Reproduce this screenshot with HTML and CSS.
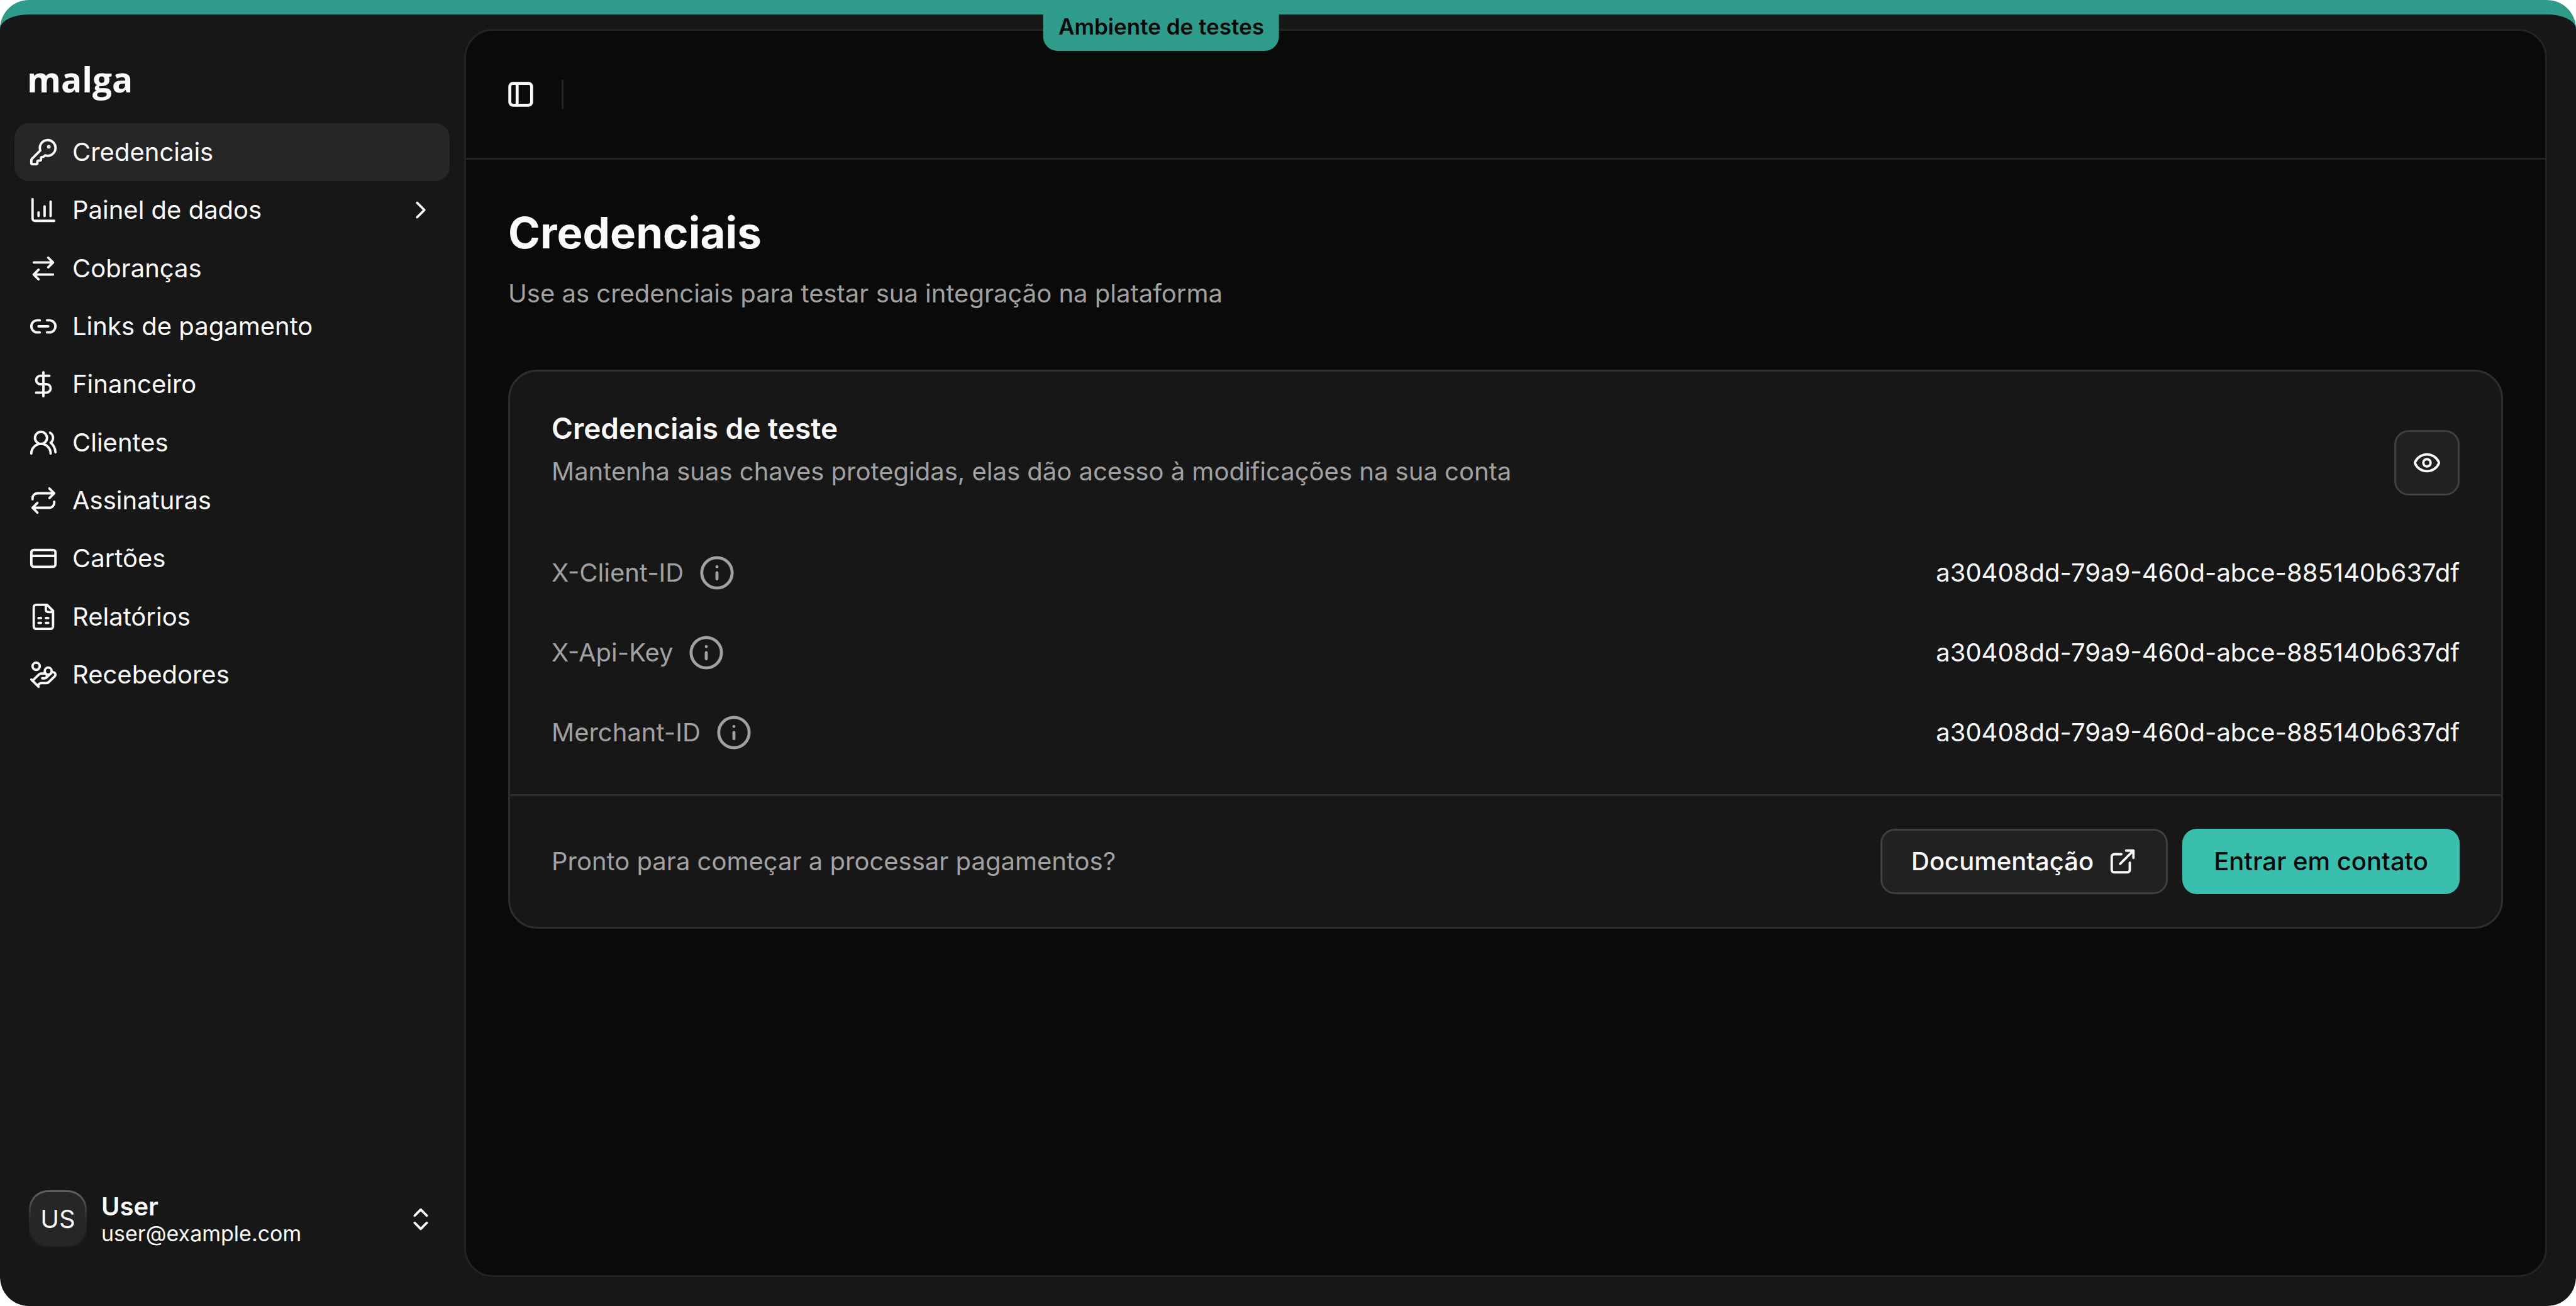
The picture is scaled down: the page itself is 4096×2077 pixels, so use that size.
FILE: index.html
```html
<!DOCTYPE html>
<html lang="pt-BR">
<head>
  <meta charset="utf-8">
  <meta name="viewport" content="width=device-width, initial-scale=1">
  <title>Credenciais – malga</title>
  <link rel="stylesheet" href="styles.css">
</head>
<body>
  <div class="app">
    <div class="env-badge">Ambiente de testes</div>

    <aside class="sidebar">
      <a class="logo" href="#">malga</a>

      <nav class="nav" aria-label="Principal">
        <a class="nav-item is-active" href="#" aria-current="page">
          <svg class="icon" viewBox="0 0 24 24" aria-hidden="true"><path d="M2.586 17.414A2 2 0 0 0 2 18.828V21a1 1 0 0 0 1 1h3a1 1 0 0 0 1-1v-1a1 1 0 0 1 1-1h1a1 1 0 0 0 1-1v-1a1 1 0 0 1 1-1h.172a2 2 0 0 0 1.414-.586l.814-.814a6.5 6.5 0 1 0-4-4z"/><circle cx="16.5" cy="7.5" r=".5" fill="currentColor"/></svg>
          <span class="nav-label">Credenciais</span>
        </a>
        <a class="nav-item" href="#">
          <svg class="icon" viewBox="0 0 24 24" aria-hidden="true"><path d="M3 3v16a2 2 0 0 0 2 2h16M18 17V5M13 17V9M8 17v-3"/></svg>
          <span class="nav-label">Painel de dados</span>
          <svg class="icon" viewBox="0 0 24 24" aria-hidden="true"><path d="m9 18 6-6-6-6"/></svg>
        </a>
        <a class="nav-item" href="#">
          <svg class="icon" viewBox="0 0 24 24" aria-hidden="true"><path d="m16 3 4 4-4 4M20 7H4M8 21l-4-4 4-4M4 17h16"/></svg>
          <span class="nav-label">Cobranças</span>
        </a>
        <a class="nav-item" href="#">
          <svg class="icon" viewBox="0 0 24 24" aria-hidden="true"><path d="M9 17H7A5 5 0 0 1 7 7h2M15 7h2a5 5 0 1 1 0 10h-2M8 12h8"/></svg>
          <span class="nav-label">Links de pagamento</span>
        </a>
        <a class="nav-item" href="#">
          <svg class="icon" viewBox="0 0 24 24" aria-hidden="true"><path d="M12 2v20M17 5H9.500a3.500 3.500 0 0 0 0 7h5a3.500 3.500 0 0 1 0 7H6"/></svg>
          <span class="nav-label">Financeiro</span>
        </a>
        <a class="nav-item" href="#">
          <svg class="icon" viewBox="0 0 24 24" aria-hidden="true"><path d="M18 21a8 8 0 0 0-16 0"/><circle cx="10" cy="8" r="5"/><path d="M22 20c0-3.370-2-6.500-4-8a5 5 0 0 0-.450-8.300"/></svg>
          <span class="nav-label">Clientes</span>
        </a>
        <a class="nav-item" href="#">
          <svg class="icon" viewBox="0 0 24 24" aria-hidden="true"><path d="m17 2 4 4-4 4M3 11v-1a4 4 0 0 1 4-4h14M7 22l-4-4 4-4M21 13v1a4 4 0 0 1-4 4H3"/></svg>
          <span class="nav-label">Assinaturas</span>
        </a>
        <a class="nav-item" href="#">
          <svg class="icon" viewBox="0 0 24 24" aria-hidden="true"><rect x="2" y="5" width="20" height="14" rx="2"/><path d="M2 10h20"/></svg>
          <span class="nav-label">Cartões</span>
        </a>
        <a class="nav-item" href="#">
          <svg class="icon" viewBox="0 0 24 24" aria-hidden="true"><path d="M15 2H6a2 2 0 0 0-2 2v16a2 2 0 0 0 2 2h12a2 2 0 0 0 2-2V7ZM14 2v4a2 2 0 0 0 2 2h4M8 13h2M14 13h2M8 17h2M14 17h2"/></svg>
          <span class="nav-label">Relatórios</span>
        </a>
        <a class="nav-item" href="#">
          <svg class="icon" viewBox="0 0 24 24" aria-hidden="true"><path d="M11 15h2a2 2 0 1 0 0-4h-3c-.6 0-1.100.2-1.400.6L3 17"/><path d="m7 21 1.600-1.400c.3-.4.8-.6 1.400-.6h4c1.100 0 2.100-.4 2.800-1.200l4.600-4.400a2 2 0 0 0-2.750-2.910l-4.200 3.900M2 16l6 6"/><circle cx="16" cy="9" r="2.900"/><circle cx="6" cy="5" r="3"/></svg>
          <span class="nav-label">Recebedores</span>
        </a>
      </nav>

      <button class="user" type="button">
        <span class="avatar">US</span>
        <span class="user-text">
          <span class="user-name">User</span>
          <span class="user-email">user@example.com</span>
        </span>
        <svg class="icon" viewBox="0 0 24 24" aria-hidden="true"><path d="m7 15 5 5 5-5M7 9l5-5 5 5"/></svg>
      </button>
    </aside>

    <main class="panel">
      <header class="topbar">
        <button class="toggle" type="button" aria-label="Alternar menu lateral">
          <svg viewBox="0 0 42 42" aria-hidden="true"><rect x="2.800" y="2.800" width="36.400" height="36.400" rx="5"/><path d="M15 3v36"/></svg>
        </button>
        <span class="separator"></span>
      </header>

      <div class="content">
        <h1 class="title">Credenciais</h1>
        <p class="subtitle">Use as credenciais para testar sua integração na plataforma</p>

        <section class="card">
          <div class="card-body">
            <div class="card-head">
              <div>
                <h2 class="card-title">Credenciais de teste</h2>
                <p class="card-desc">Mantenha suas chaves protegidas, elas dão acesso à modificações na sua conta</p>
              </div>
              <button class="btn btn-outline btn-square" type="button" aria-label="Mostrar credenciais">
                <svg class="icon" viewBox="0 0 24 24" aria-hidden="true"><path d="M2.062 12.348a1 1 0 0 1 0-.696 10.750 10.750 0 0 1 19.876 0 1 1 0 0 1 0 .696 10.750 10.750 0 0 1-19.876 0"/><circle cx="12" cy="12" r="3"/></svg>
              </button>
            </div>

            <dl class="keys">
              <div class="key-row">
                <dt>X-Client-ID
                  <button class="info" type="button" aria-label="Sobre X-Client-ID"><svg viewBox="0 0 24 24" aria-hidden="true"><circle cx="12" cy="12" r="10"/><path d="M12 16v-4M12 8h.01"/></svg></button>
                </dt>
                <dd>a30408dd-79a9-460d-abce-885140b637df</dd>
              </div>
              <div class="key-row">
                <dt>X-Api-Key
                  <button class="info" type="button" aria-label="Sobre X-Api-Key"><svg viewBox="0 0 24 24" aria-hidden="true"><circle cx="12" cy="12" r="10"/><path d="M12 16v-4M12 8h.01"/></svg></button>
                </dt>
                <dd>a30408dd-79a9-460d-abce-885140b637df</dd>
              </div>
              <div class="key-row">
                <dt>Merchant-ID
                  <button class="info" type="button" aria-label="Sobre Merchant-ID"><svg viewBox="0 0 24 24" aria-hidden="true"><circle cx="12" cy="12" r="10"/><path d="M12 16v-4M12 8h.01"/></svg></button>
                </dt>
                <dd>a30408dd-79a9-460d-abce-885140b637df</dd>
              </div>
            </dl>
          </div>

          <footer class="card-foot">
            <p class="foot-text">Pronto para começar a processar pagamentos?</p>
            <a class="btn btn-outline" href="#">Documentação
              <svg class="icon" viewBox="0 0 24 24" aria-hidden="true"><path d="M15 3h6v6M10 14 21 3M18 13v6a2 2 0 0 1-2 2H5a2 2 0 0 1-2-2V8a2 2 0 0 1 2-2h6"/></svg>
            </a>
            <button class="btn btn-primary" type="button">Entrar em contato</button>
          </footer>
        </section>
      </div>
    </main>
  </div>
</body>
</html>
```
FILE: styles.css
```css
:root {
  --teal-dark: #2f9b8a;
  --teal: #3abfae;
  --bg: #0a0a0a;
  --surface: #171717;
  --surface-hover: #262626;
  --line: #232323;
  --line-card: #2e2e2e;
  --text: #fafafa;
  --muted: #a1a1a1;
}

* {
  box-sizing: border-box;
}

html {
  background: #fff;
}

body {
  margin: 0;
  font-family: Inter, "Liberation Sans", sans-serif;
  font-size: 40px;
  line-height: 60px;
  color: var(--text);
}

h1,
h2,
p,
dl,
dd {
  margin: 0;
}

a {
  color: inherit;
  text-decoration: none;
}

button {
  padding: 0;
  border: 0;
  background: none;
  color: inherit;
  font: inherit;
  text-align: left;
  cursor: pointer;
}

svg {
  display: block;
  flex: none;
  fill: none;
  stroke: currentColor;
  stroke-width: 2;
  stroke-linecap: round;
  stroke-linejoin: round;
}

.icon {
  width: 46px;
  height: 46px;
}

.app {
  position: relative;
  display: flex;
  min-height: 100vh;
  border-top: 23px solid var(--teal-dark);
  border-radius: 46px;
  background: var(--surface);
}

.env-badge {
  position: absolute;
  top: 0;
  left: 45.08%;
  padding: 0 24px 20px;
  border-radius: 0 0 23px 23px;
  background: var(--teal-dark);
  color: var(--bg);
  font-size: 35px;
  font-weight: 600;
  line-height: 38px;
  white-space: nowrap;
  transform: translateX(-50%);
}

/* Sidebar */

.sidebar {
  display: flex;
  flex: none;
  flex-direction: column;
  width: 738px;
  padding: 0 23px 69px;
}

.logo {
  padding: 63px 20px 30px;
  font-family: "Open Sans", sans-serif;
  font-size: 55px;
  font-weight: 700;
  line-height: 80px;
}

.nav {
  display: grid;
  grid-auto-rows: 1fr;
  min-height: 923px;
  margin-bottom: auto;
}

.nav-item {
  display: flex;
  align-items: center;
  gap: 23px;
  padding: 0 23px;
  border-radius: 23px;
}

.nav-item.is-active {
  background: var(--surface-hover);
}

.nav-label {
  flex: 1;
}

.user {
  display: flex;
  align-items: center;
  gap: 23px;
  padding: 23px;
}

.avatar {
  display: grid;
  place-items: center;
  width: 92px;
  height: 92px;
  border: 3px solid transparent;
  border-radius: 30px;
  background:
    linear-gradient(var(--surface-hover), var(--surface-hover)) padding-box,
    linear-gradient(#636363, #262626 55%, #1b1b1b) border-box;
}

.user-text {
  display: flex;
  flex: 1;
  flex-direction: column;
}

.user-name {
  font-weight: 600;
  line-height: 46px;
}

.user-email {
  font-size: 34px;
  line-height: 40px;
}

/* Main panel */

.panel {
  flex: 1;
  min-width: 0;
  margin: 23px 46px 46px 0;
  border: 3px solid var(--line);
  border-radius: 46px;
  background: var(--bg);
}

.topbar {
  display: flex;
  align-items: center;
  gap: 45px;
  height: 205px;
  padding: 0 67px;
  border-bottom: 3px solid var(--line);
}

.toggle svg {
  width: 40px;
  height: 40px;
  stroke-width: 5;
}

.separator {
  width: 3px;
  height: 46px;
  background: var(--line);
}

.content {
  padding: 70px 67px;
}

.title {
  font-size: 69px;
  font-weight: 700;
  line-height: 92px;
}

.subtitle {
  margin: 21px 0 91px;
  color: var(--muted);
}

.card {
  border: 3px solid var(--line-card);
  border-radius: 46px;
  background: var(--surface);
}

.card-body {
  padding: 60px 66px 69px;
}

.card-head {
  display: flex;
  align-items: flex-end;
  justify-content: space-between;
}

.card-title {
  font-size: 46px;
  font-weight: 600;
  line-height: 60px;
}

.card-desc {
  color: var(--muted);
  line-height: 77px;
}

.keys {
  display: grid;
  gap: 69px;
  margin-top: 94px;
}

.key-row {
  display: flex;
  align-items: center;
  justify-content: space-between;
  height: 58px;
}

.key-row dt {
  display: flex;
  align-items: center;
  gap: 24px;
  color: var(--muted);
}

.info svg {
  width: 58px;
  height: 58px;
}

.card-foot {
  display: flex;
  align-items: center;
  gap: 23px;
  padding: 52px 66px;
  border-top: 3px solid var(--line-card);
}

.foot-text {
  flex: 1;
  color: var(--muted);
}

.btn {
  display: flex;
  align-items: center;
  justify-content: center;
  gap: 23px;
  height: 104px;
  padding: 0 50px;
  border-radius: 23px;
  font-weight: 500;
  white-space: nowrap;
}

.btn-outline {
  padding: 0 46px;
  border: 3px solid #404040;
  background: #212121;
}

.btn-square {
  width: 104px;
  padding: 0;
}

.btn-primary {
  background: var(--teal);
  color: var(--bg);
}
```
